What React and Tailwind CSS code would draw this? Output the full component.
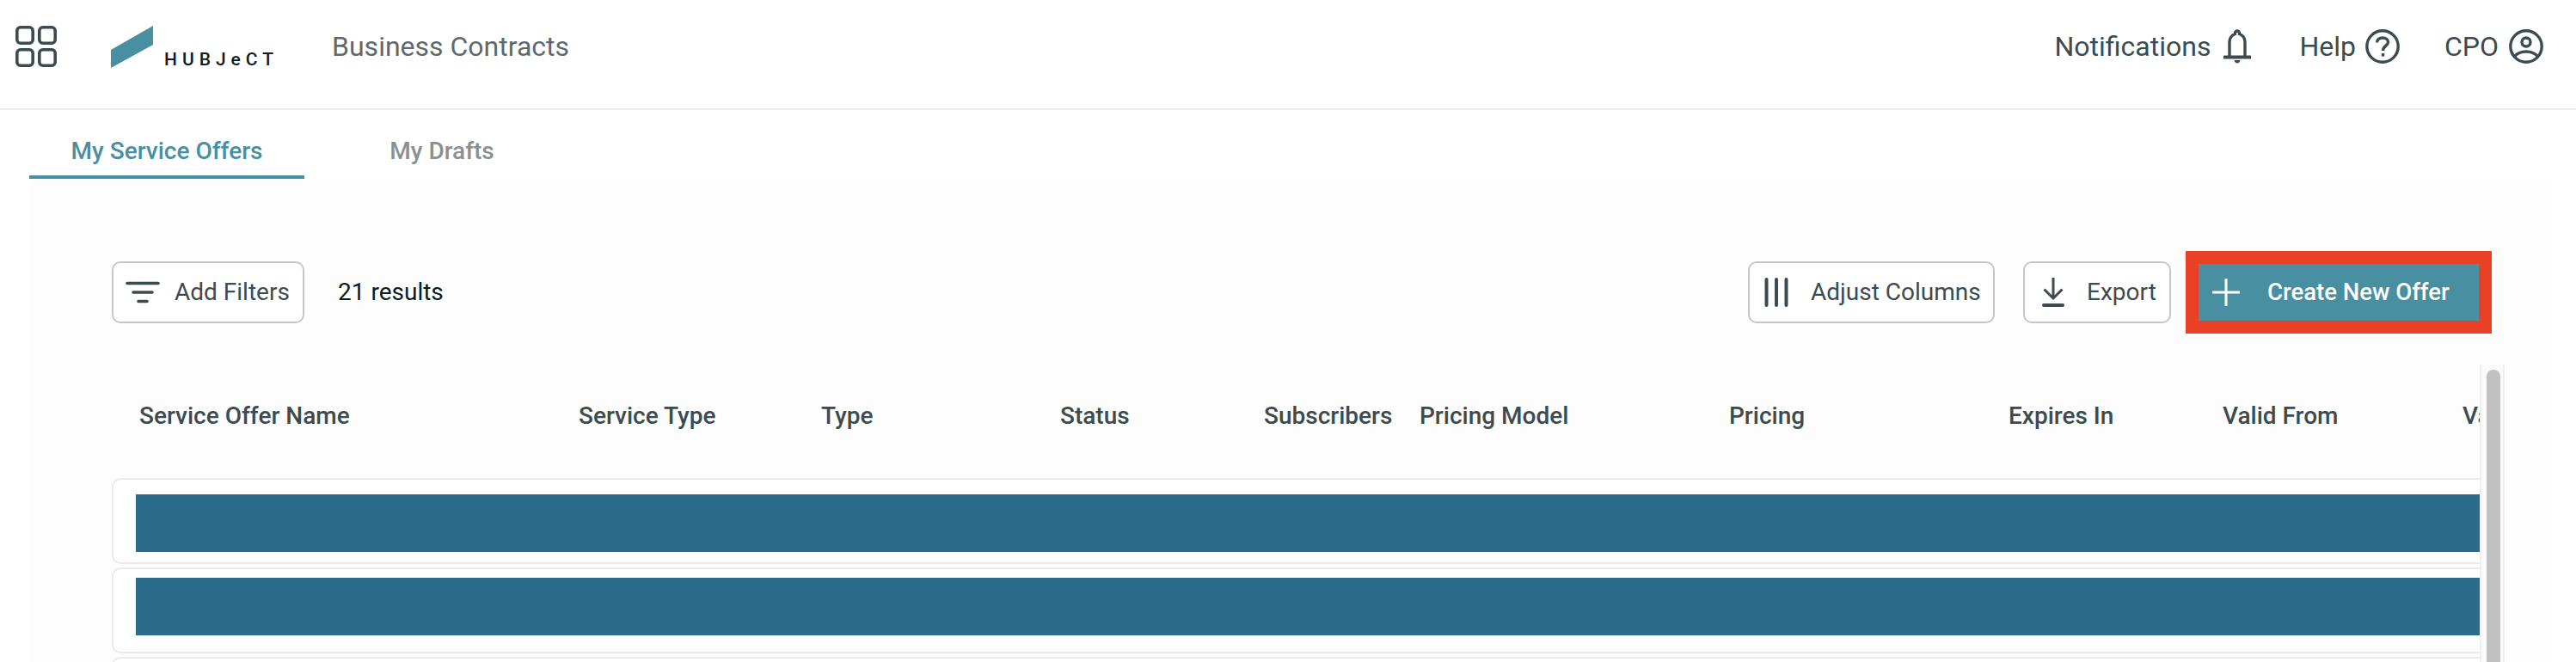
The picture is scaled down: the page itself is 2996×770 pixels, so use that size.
const columns = [
  { label: 'Service Offer Name', width: 'w-[511px]' },
  { label: 'Service Type', width: 'w-[282px]' },
  { label: 'Type', width: 'w-[278px]' },
  { label: 'Status', width: 'w-[237px]' },
  { label: 'Subscribers', width: 'w-[181px]' },
  { label: 'Pricing Model', width: 'w-[360px]' },
  { label: 'Pricing', width: 'w-[325px]' },
  { label: 'Expires In', width: 'w-[249px]' },
  { label: 'Valid From', width: 'w-[279px]' },
  { label: 'Valid To', width: 'w-[200px]' },
]

function AppsIcon() {
  return (
    <svg width="48" height="48" viewBox="0 0 48 48" fill="none" stroke="#3c4b4f" strokeWidth="3.6">
      <rect x="1.8" y="1.8" width="18.4" height="18.4" rx="4" />
      <rect x="27.8" y="1.8" width="18.4" height="18.4" rx="4" />
      <rect x="1.8" y="27.8" width="18.4" height="18.4" rx="4" />
      <rect x="27.8" y="27.8" width="18.4" height="18.4" rx="4" />
    </svg>
  )
}

function BellIcon() {
  return (
    <svg width="32" height="40" viewBox="0 0 32 40" fill="none" stroke="#3c4b4f" strokeWidth="3.4">
      <path d="M7 31V15C7 10 9.500 7 13.500 5.500V4.500A2.500 2.500 0 0 1 18.500 4.500V5.500C22.500 7 25 10 25 15V31" />
      <path d="M1 32.500H31" strokeWidth="4" strokeLinecap="round" />
      <path d="M12.500 36H19.500C19 38.500 17.500 39.500 16 39.500S13 38.500 12.500 36Z" fill="#3c4b4f" stroke="none" />
    </svg>
  )
}

function HelpIcon() {
  return (
    <svg width="40" height="40" viewBox="0 0 40 40" fill="none" stroke="#3c4b4f" strokeWidth="3.400">
      <circle cx="20" cy="20" r="18.200" />
      <path d="M13.500 15.500C13.500 12 16.500 10 20 10S26.500 12 26.500 15C26.500 19 20.500 19.500 20.500 25" />
      <rect x="18.800" y="28" width="3.400" height="3.600" fill="#3c4b4f" stroke="none" />
    </svg>
  )
}

function UserIcon() {
  return (
    <svg width="40" height="40" viewBox="0 0 40 40" fill="none" stroke="#3c4b4f" strokeWidth="3.400">
      <circle cx="20" cy="20" r="18.200" />
      <circle cx="20" cy="15" r="5" />
      <path d="M6 32C10 27.500 15 26 20 26S30 27.500 34 32" />
    </svg>
  )
}

function FilterIcon() {
  return (
    <svg width="40" height="26" viewBox="0 0 40 26" stroke="#3c4b4f" strokeWidth="3.600" strokeLinecap="round">
      <path d="M2 2.500H38M9 13H31M15 23.500H25" />
    </svg>
  )
}

function ColumnsIcon() {
  return (
    <svg width="28" height="34" viewBox="0 0 28 34" stroke="#3c4b4f" strokeWidth="4" strokeLinecap="round">
      <path d="M2.500 2V32M14 2V32M25.500 2V32" />
    </svg>
  )
}

function ExportIcon() {
  return (
    <svg width="26" height="34" viewBox="0 0 26 34" fill="none" stroke="#3c4b4f" strokeWidth="3">
      <path d="M13 0V24M2.500 13.500L13 24L23.500 13.500" />
      <path d="M2 32H24" strokeWidth="4" strokeLinecap="round" />
    </svg>
  )
}

function PlusIcon() {
  return (
    <svg width="32" height="32" viewBox="0 0 32 32" stroke="#ffffff" strokeWidth="3">
      <path d="M16 0V32M0 16H32" />
    </svg>
  )
}

function OutlineButton({ icon, label, className }) {
  return (
    <button className={`flex items-center h-[72px] rounded-[10px] border-2 border-[#c6c6c6] bg-white text-[28px] text-[#3c4b4f] ${className}`}>
      {icon}
      {label && <span>{label}</span>}
    </button>
  )
}

export default function App() {
  return (
    <div className="h-[770px] overflow-hidden bg-white font-['Roboto',sans-serif]">
      {/* Top bar */}
      <header className="flex items-center h-[128px] pb-[18px] pl-[18px] pr-[38px] border-b-2 border-[#e8eded]">
        <AppsIcon />
        <div className="flex items-end ml-[63px]">
          <svg width="49" height="49" viewBox="0 0 49 49" className="block">
            <polygon points="0,28 49,0 49,22 0,49" fill="#478fa1" />
          </svg>
          <span className="ml-[13px] mb-[-2px] text-[21px] font-medium leading-[24px] tracking-[6px] text-[#111a1e]">HUBJeCT</span>
        </div>
        <span className="ml-[62px] text-[32px] text-[#5c6a6e]">Business Contracts</span>
        <nav className="flex items-center ml-auto text-[32px] text-[#3c4b4f]">
          <span>Notifications</span>
          <span className="ml-[15px]"><BellIcon /></span>
          <span className="ml-[56px]">Help</span>
          <span className="ml-[11px]"><HelpIcon /></span>
          <span className="ml-[52px]">CPO</span>
          <span className="ml-[12px]"><UserIcon /></span>
        </nav>
      </header>

      {/* Tabs */}
      <div className="flex h-[80px] mx-[34px] text-[28px] font-medium">
        <div className="flex items-end justify-center w-[320px] pb-[7px] border-b-4 border-[#478fa1] text-[#478fa1]">My Service Offers</div>
        <div className="flex items-end justify-center w-[320px] pb-[11px] text-[#8a9091]">My Drafts</div>
      </div>

      <main className="mx-[34px] h-[562px] pt-[84px] bg-[#fdfdfd]">
        {/* Toolbar */}
        <div className="flex items-center pl-[96px] pr-[64px]">
          <OutlineButton icon={<FilterIcon />} label="Add Filters" className="w-[224px] pl-[14px] gap-[17px]" />
          <span className="ml-[39px] text-[28px] text-[#0f1a1e]">21 results</span>
          <div className="flex items-center ml-auto">
            <OutlineButton icon={<ColumnsIcon />} label="Adjust Columns" className="w-[287px] pl-[17px] gap-[26px]" />
            <OutlineButton icon={<ExportIcon />} label="Export" className="w-[172px] ml-[33px] pl-[20px] gap-[26px]" />
            <div className="ml-[17px] p-[15px] bg-[#ea4126]">
              <button className="flex items-center w-[326px] h-[66px] pl-4 gap-[32px] bg-[#478fa1] text-[27.500px] font-medium text-white">
                <PlusIcon />
                <span>Create New Offer</span>
              </button>
            </div>
          </div>
        </div>

        {/* Table */}
        <div className="flex h-[346px] mt-[36px] ml-[96px]">
          <div className="w-[2754px] overflow-hidden">
            <div className="flex items-center h-[132px] pb-[12px] pl-[32px] text-[28px] font-medium text-[#3c4b4f] whitespace-nowrap">
              {columns.map(col => (
                <div key={col.label} className={`shrink-0 ${col.width}`}>{col.label}</div>
              ))}
            </div>
            <div className="flex flex-col gap-[4px] w-[2800px]">
              <div className="h-[100px] pt-[17px] pl-[26px] rounded-[10px] border-2 border-[#ebebeb] bg-white">
                <div className="h-[67px] bg-[#2d6b8c]" />
              </div>
              <div className="h-[100px] pt-[10px] pl-[26px] rounded-[10px] border-2 border-[#ebebeb] bg-white">
                <div className="h-[67px] bg-[#2d6b8c]" />
              </div>
              <div className="h-[100px] rounded-[10px] border-2 border-[#ebebeb] bg-white" />
            </div>
          </div>
          {/* Scrollbar */}
          <div className="w-[29px] pt-[6px] pl-[6px] pr-[5px] bg-[#fafafa] border-x-2 border-[#eeeeee]">
            <div className="h-full w-[16px] rounded-t-full bg-[#c1c1c1]" />
          </div>
        </div>
      </main>
    </div>
  )
}
